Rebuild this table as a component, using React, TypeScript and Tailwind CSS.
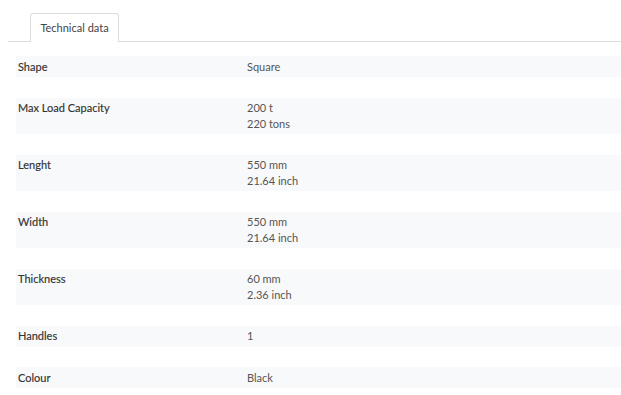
const rows: { label: string; values: string[] }[] = [
  { label: "Shape", values: ["Square"] },
  { label: "Max Load Capacity", values: ["200 t", "220 tons"] },
  { label: "Lenght", values: ["550 mm", "21.64 inch"] },
  { label: "Width", values: ["550 mm", "21.64 inch"] },
  { label: "Thickness", values: ["60 mm", "2.36 inch"] },
  { label: "Handles", values: ["1"] },
  { label: "Colour", values: ["Black"] },
];

export default function App() {
  return (
    <div className="w-[621px] h-[395px] bg-white pl-2 pt-[13px] overflow-hidden font-['Lato','Open_Sans',sans-serif]">
      <div className="flex border-b border-[#dcdcdc] pl-[22px]">
        <div className="-mb-px h-[29px] w-[89px] rounded-t-[3px] border border-b-0 border-[#dcdcdc] bg-white flex items-center justify-center text-[11px] text-[#444]">
          Technical data
        </div>
      </div>
      <div className="flex flex-col gap-[20.5px] pl-2 pt-[14px]">
        {rows.map((row) => (
          <div key={row.label} className="flex bg-[#f8f9fa] py-[2.75px] text-[11px] leading-[15.5px]">
            <div className="w-[231px] pl-[2px] font-normal text-[#333] [-webkit-text-stroke:0.15px_#333]">
              {row.label}
            </div>
            <div className="flex flex-col text-[#555]">
              {row.values.map((v) => (
                <span key={v}>{v}</span>
              ))}
            </div>
          </div>
        ))}
      </div>
    </div>
  );
}
